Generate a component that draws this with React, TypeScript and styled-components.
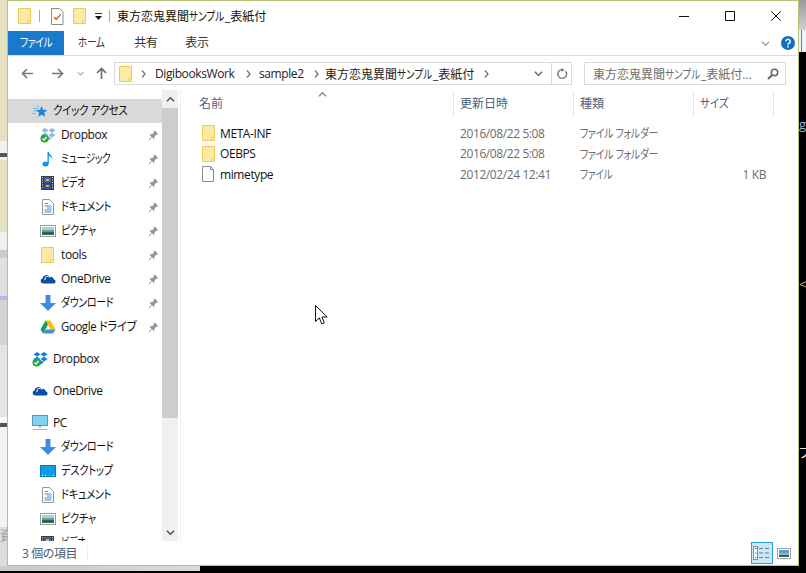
import { ReactNode } from 'react';
import styled, { createGlobalStyle } from 'styled-components';

const GlobalStyle = createGlobalStyle`
  html, body {
    margin: 0;
    padding: 0;
    background: #000;
    overflow: hidden;
  }
  body {
    font-family: "Open Sans", "Noto Sans CJK JP", sans-serif;
    font-size: 12px;
    letter-spacing: -0.4px;
    font-feature-settings: "palt";
    color: #111;
  }
  svg {
    display: block;
    flex-shrink: 0;
  }
`;

const Screen = styled.div`
  position: relative;
  width: 806px;
  height: 573px;
  overflow: hidden;
  background: #000;
`;

const Upper = styled.div`
  display: flex;
  height: 566px;
`;

const LeftStrip = styled.div`
  width: 7px;
  display: flex;
  flex-direction: column;
  overflow: hidden;
`;

const Band = styled.div<{ $h: number; $bg: string }>`
  height: ${(p) => p.$h}px;
  background: ${(p) => p.$bg};
  flex-shrink: 0;
`;

const RightStrip = styled.div`
  width: 7px;
  display: flex;
  flex-direction: column;
  overflow: hidden;
`;

const StripGlyph = styled.div<{ $top: number; $color: string; $bg?: string }>`
  margin-top: ${(p) => p.$top}px;
  height: 16px;
  line-height: 16px;
  font-size: 13px;
  color: ${(p) => p.$color};
  background: ${(p) => p.$bg || 'transparent'};
  white-space: nowrap;
  flex-shrink: 0;
`;

const BottomStrip = styled.div`
  width: 200px;
  height: 5px;
  background: linear-gradient(90deg, #c9c9c9, #dadada);
`;

const Window = styled.div`
  width: 792px;
  height: 566px;
  box-sizing: border-box;
  border: 1px solid #b6c274;
  background: #fff;
  display: flex;
  flex-direction: column;
`;

const Narrow = styled.span<{ $s: number; $cut?: number }>`
  display: inline-block;
  white-space: nowrap;
  transform: scaleX(${(p) => p.$s});
  transform-origin: left center;
  margin-right: ${(p) => -(p.$cut || 0)}px;
`;

const TitleBar = styled.div`
  height: 30px;
  display: flex;
  align-items: center;
  flex-shrink: 0;
`;

const QuickTools = styled.div`
  display: flex;
  align-items: center;
  padding-left: 10px;
  width: 109px;
  box-sizing: border-box;
`;

const ToolSep = styled.div<{ $left: number }>`
  width: 1px;
  height: 12px;
  background: #a8a8a8;
  margin-left: ${(p) => p.$left}px;
`;

const ToolSlot = styled.div<{ $left: number }>`
  margin-left: ${(p) => p.$left}px;
`;

const Title = styled.div`
  flex: 1;
  letter-spacing: 0;
  color: #111;
  white-space: nowrap;
`;

const WindowButtons = styled.div`
  display: flex;
  align-items: center;
  gap: 36px;
  padding-right: 17px;
`;

const RibbonTabs = styled.div`
  height: 25px;
  box-sizing: border-box;
  border-bottom: 1px solid #dadbdc;
  display: flex;
  align-items: flex-start;
  flex-shrink: 0;
`;

const FileTab = styled.div`
  width: 56px;
  height: 24px;
  line-height: 23px;
  box-sizing: border-box;
  padding-left: 12px;
  background: #1979ca;
  color: #fff;
`;

const RibbonTab = styled.div<{ $left: number }>`
  margin-left: ${(p) => p.$left}px;
  line-height: 23px;
  color: #333;
`;

const RibbonRight = styled.div`
  margin-left: auto;
  height: 24px;
  display: flex;
  align-items: center;
  gap: 11px;
  padding-right: 3px;
`;

const AddressRow = styled.div`
  height: 34px;
  display: flex;
  align-items: flex-start;
  padding-top: 6px;
  box-sizing: border-box;
  flex-shrink: 0;
`;

const NavButtons = styled.div`
  width: 106px;
  height: 23px;
  display: flex;
  align-items: center;
  padding-left: 13px;
  box-sizing: border-box;
`;

const NavSlot = styled.div<{ $left: number }>`
  margin-left: ${(p) => p.$left}px;
`;

const AddressBox = styled.div`
  width: 458px;
  height: 23px;
  box-sizing: border-box;
  border: 1px solid #d9d9d9;
  display: flex;
  align-items: center;
  padding-left: 4px;
`;

const Crumb = styled.span<{ $width: number; $plain?: boolean }>`
  width: ${(p) => p.$width}px;
  color: #222;
  white-space: nowrap;
  letter-spacing: ${(p) => (p.$plain ? '0' : '-0.4px')};
`;

const CrumbArrow = styled.div<{ $left: number; $right: number }>`
  margin: 0 ${(p) => p.$right}px 0 ${(p) => p.$left}px;
`;

const AddressEnd = styled.div`
  margin-left: auto;
  display: flex;
  align-items: center;
  height: 100%;
`;

const DropSlot = styled.div`
  width: 25px;
  height: 100%;
  display: flex;
  align-items: center;
  justify-content: center;
  border-right: 1px solid #d9d9d9;
`;

const RefreshSlot = styled.div`
  width: 19px;
  display: flex;
  align-items: center;
  justify-content: center;
`;

const SearchBox = styled.div`
  width: 202px;
  height: 23px;
  margin-left: 12px;
  box-sizing: border-box;
  border: 1px solid #d9d9d9;
  display: flex;
  align-items: center;
  justify-content: space-between;
  padding: 0 6px 0 8px;
  color: #6d6d6d;
  letter-spacing: 0;
`;

const SearchText = styled.span`
  white-space: nowrap;
`;

const Body = styled.div`
  flex: 1;
  display: flex;
  min-height: 0;
`;

const NavPane = styled.div`
  width: 154px;
  padding-top: 9px;
  box-sizing: border-box;
  overflow: hidden;
  flex-shrink: 0;
`;

const NavRow = styled.div<{ $level: number; $active?: boolean; $gap?: boolean }>`
  height: 24px;
  display: flex;
  align-items: center;
  gap: 5px;
  padding-left: ${(p) => (p.$level ? 32 : 24)}px;
  padding-right: 3px;
  margin-top: ${(p) => (p.$gap ? 8 : 0)}px;
  background: ${(p) => (p.$active ? '#d9d9d9' : 'transparent')};
  white-space: nowrap;
`;

const NavIconSlot = styled.div`
  width: 16px;
  display: flex;
  justify-content: center;
`;

const NavLabel = styled.div`
  margin-bottom: 2px;
`;

const PinSlot = styled.div`
  margin-left: auto;
`;

const Scrollbar = styled.div`
  width: 16px;
  display: flex;
  flex-direction: column;
  background: #f0f0f0;
  flex-shrink: 0;
`;

const ScrollButton = styled.div`
  height: 18px;
  display: flex;
  align-items: center;
  justify-content: center;
  flex-shrink: 0;
`;

const ScrollTrack = styled.div`
  flex: 1;
`;

const ScrollThumb = styled.div`
  height: 310px;
  background: #cdcdcd;
`;

const FilePane = styled.div`
  flex: 1;
  margin-left: 2px;
  border-left: 1px solid #f0f0f0;
  padding-top: 2px;
`;

const HeaderRow = styled.div`
  position: relative;
  display: grid;
  grid-template-columns: 273px 120px 120px 80px;
  height: 24px;
  margin-bottom: 7px;
`;

const HeaderCell = styled.div<{ $pad: number }>`
  padding-left: ${(p) => p.$pad}px;
  line-height: 24px;
  letter-spacing: 0;
  color: #4c607a;
  border-right: 1px solid #e5e5e5;
`;

const SortCaret = styled.div`
  position: absolute;
  left: 137px;
  top: -2px;
`;

const FileRow = styled.div`
  display: grid;
  grid-template-columns: 273px 120px 120px 80px;
  height: 20.5px;
  align-items: center;
`;

const NameCell = styled.div`
  display: flex;
  align-items: center;
  gap: 4px;
  padding-left: 21px;
  color: #111;
`;

const MetaCell = styled.div<{ $right?: boolean }>`
  padding: 0 8px 0 6px;
  color: #6d6d6d;
  white-space: nowrap;
  text-align: ${(p) => (p.$right ? 'right' : 'left')};
`;

const StatusBar = styled.div`
  height: 24px;
  display: flex;
  align-items: center;
  flex-shrink: 0;
  color: #4a5a70;
`;

const StatusText = styled.div`
  width: 65px;
  padding-left: 14px;
  white-space: nowrap;
`;

const StatusSep = styled.div`
  width: 1px;
  height: 14px;
  background: #efefef;
`;

const ViewButtons = styled.div`
  margin-left: auto;
  display: flex;
  align-items: center;
  gap: 4px;
  padding-right: 7px;
`;

const ViewButton = styled.div<{ $selected?: boolean }>`
  width: 22px;
  height: 22px;
  box-sizing: border-box;
  display: flex;
  align-items: center;
  justify-content: center;
  border: 1px solid ${(p) => (p.$selected ? '#26a0da' : 'transparent')};
  background: ${(p) => (p.$selected ? '#cbe8f6' : 'transparent')};
`;

const Cursor = styled.div`
  position: absolute;
  left: 315px;
  top: 305px;
`;

const FolderIcon = () => (
  <svg width="14" height="16" viewBox="2 0 14 16">
    <path d="M2.5.5h12v15h-12z" fill="#ffe9a6" stroke="#eecb55" />
    <path d="M11.5 15.5v-3h3" fill="#fff3c9" stroke="#eecb55" />
  </svg>
);

const PropsIcon = () => (
  <svg width="13" height="17" viewBox="0 0 13 17">
    <path d="M.5.5h8l3.500 3.500v12.500H.5z" fill="#fff" stroke="#8c8c8c" />
    <path d="M3 9l2.200 2.400 4.500-5" fill="none" stroke="#e2571e" strokeWidth="1.4" />
  </svg>
);

const QuickCaret = () => (
  <svg width="9" height="7" viewBox="0 0 9 7">
    <path d="M1 0h7v1H1z" fill="#333" />
    <path d="M1 3h7L4.500 7z" fill="#111" />
  </svg>
);

const MinIcon = () => (
  <svg width="10" height="10" viewBox="0 0 10 10">
    <path d="M0 5.500h10" stroke="#111" />
  </svg>
);

const MaxIcon = () => (
  <svg width="10" height="10" viewBox="0 0 10 10">
    <path d="M.5.5h9v9h-9z" fill="none" stroke="#111" />
  </svg>
);

const CloseIcon = () => (
  <svg width="10" height="10" viewBox="0 0 10 10">
    <path d="M.3.3l9.400 9.400M9.700.3L.3 9.700" stroke="#111" />
  </svg>
);

const Chevron = ({ up, color = '#888', size = 9 }: { up?: boolean; color?: string; size?: number }) => (
  <svg width={size} height={size} viewBox="0 0 10 10">
    <path
      d={up ? 'M1 7l4-4 4 4' : 'M1 3l4 4 4-4'}
      fill="none"
      stroke={color}
      strokeWidth="1.5"
    />
  </svg>
);

const HelpIcon = () => (
  <svg width="14" height="14" viewBox="0 0 14 14">
    <circle cx="7" cy="7" r="7" fill="#0f6fc0" />
    <path d="M4.800 5.300a2.200 2 0 1 1 3.300 1.800c-.8.5-1.100.9-1.100 1.700" fill="none" stroke="#fff" strokeWidth="1.5" />
    <path d="M6.200 9.800h1.600v1.600H6.200z" fill="#fff" />
  </svg>
);

const ArrowIcon = ({ dir, color }: { dir: 'left' | 'right' | 'up'; color: string }) => {
  const angle = dir === 'left' ? 180 : dir === 'up' ? -90 : 0;
  return (
    <svg width="13" height="13" viewBox="0 0 13 13">
      <g transform={`rotate(${angle} 6.5 6.5)`}>
        <path d="M1 6.500h10M7 2l4.500 4.500L7 11" fill="none" stroke={color} strokeWidth="1.7" />
      </g>
    </svg>
  );
};

const CrumbChevron = () => (
  <svg width="5" height="8" viewBox="0 0 5 8">
    <path d="M1 .5L4 4 1 7.500" fill="none" stroke="#777" strokeWidth="1.3" />
  </svg>
);

const RefreshIcon = () => (
  <svg width="12" height="12" viewBox="0 0 12 12">
    <path d="M9.600 3.200A4.400 4.400 0 1 1 6 1.600" fill="none" stroke="#777" strokeWidth="1.4" />
    <path d="M5.600 0v4l3-2z" fill="#777" />
  </svg>
);

const SearchIcon = () => (
  <svg width="12" height="12" viewBox="0 0 12 12">
    <circle cx="7.500" cy="4.500" r="3.200" fill="none" stroke="#666" strokeWidth="1.5" />
    <path d="M5 7L1 11" stroke="#666" strokeWidth="2" />
  </svg>
);

const PinIcon = () => (
  <svg width="11" height="11" viewBox="0 0 10 11">
    <path d="M6 .3l3.700 3.700-1 .6-.7-.2L6 6.500l.2 1.800-.9.7L1.200 5l.7-.9 1.800.2 2-2-.2-.8z" fill="#949494" />
    <path d="M3 7.200L.4 10" stroke="#949494" />
  </svg>
);

const StarIcon = () => (
  <svg width="16" height="16" viewBox="0 0 16 16">
    <path d="M9.600 3l1.600 3.700 4 .4-3 2.700.9 3.900-3.500-2-3.400 2 .9-3.900-3-2.700 4-.4z" fill="#1b84d8" />
    <path d="M1 5.500h4M2 8h3M.5 10.500h3M5 3.500l2 .5" stroke="#62b1ea" />
  </svg>
);

const DropboxIcon = ({ tone, badge = '#2fa33f' }: { tone: string; badge?: string }) => (
  <svg width="16" height="16" viewBox="0 0 16 16">
    <path
      d="M5 1L8.500 3.300 5 5.700 1.500 3.300zM12 1l3.500 2.300L12 5.700 8.500 3.300zM5 5.700L8.500 8 5 10.400 1.500 8zM12 5.700L15.500 8 12 10.400 8.500 8zM8.500 9L12 11.200 8.500 13.500 5 11.200z"
      fill={tone}
    />
    <circle cx="4.500" cy="11.500" r="4" fill={badge} />
    <path d="M2.500 11.500l1.500 1.500 2.500-3" fill="none" stroke="#fff" strokeWidth="1.2" />
  </svg>
);

const NoteIcon = () => (
  <svg width="16" height="16" viewBox="0 0 16 16">
    <ellipse cx="5.500" cy="13" rx="3" ry="2.500" fill="#0a97e6" />
    <path d="M7.500 13V1h1.300c.4 2.500 4 3.500 3.500 7.500-.4-2-2-3.200-3.500-3.700V13z" fill="#0a97e6" />
  </svg>
);

const VideoIcon = () => (
  <svg width="16" height="16" viewBox="0 0 16 16">
    <rect x="1" y="1" width="13" height="14" fill="#3d3d3d" />
    <rect x="4" y="2" width="7" height="5.500" fill="#3a62b8" />
    <rect x="4" y="8.500" width="7" height="5.500" fill="#2e4fa5" />
    <rect x="6" y="4" width="3" height="2" fill="#d8b53a" />
    <rect x="6" y="10" width="3" height="2" fill="#d8b53a" />
    <path d="M2 2.500h1M2 5h1M2 7.500h1M2 10h1M2 12.500h1M12 2.500h1M12 5h1M12 7.500h1M12 10h1M12 12.500h1" stroke="#ddd" />
  </svg>
);

const DocIcon = () => (
  <svg width="16" height="16" viewBox="0 0 16 16">
    <path d="M2.500.5h7l4 4v11h-11z" fill="#fff" stroke="#969696" />
    <path d="M5 4.500h3M4.500 7h7M7 9h4.500M4.500 11h7M4.500 13h7" stroke="#3d8fd0" />
  </svg>
);

const PictureIcon = () => (
  <svg width="16" height="16" viewBox="0 0 16 16">
    <rect x=".5" y="2.500" width="15" height="11" fill="#fff" stroke="#9b9b9b" />
    <rect x="2" y="4" width="12" height="4" fill="#a6cfe9" />
    <rect x="2" y="7" width="12" height="2" fill="#6f9d91" />
    <rect x="2" y="9" width="12" height="3" fill="#35634f" />
  </svg>
);

const DownloadIcon = () => (
  <svg width="16" height="16" viewBox="0 0 16 16">
    <path d="M5.500 0h5v8H16l-8 8-8-8h5.500z" fill="#3d8fe0" />
  </svg>
);

const CloudIcon = () => (
  <svg width="16" height="16" viewBox="0 0 16 16">
    <path d="M3 12.500A2.500 2.500 0 0 1 2.400 7.600 4 4 0 0 1 9.800 6a3 3 0 0 1 4 2.400 2.100 2.100 0 0 1 .3 4.100z" fill="#0b4ea6" />
    <path d="M5 9.200a3 3 0 0 1 5.200-2.800" fill="none" stroke="#fff" />
  </svg>
);

const DriveIcon = () => (
  <svg width="16" height="16" viewBox="0 0 16 16">
    <path d="M5.500 1.500h5l5 9h-5z" fill="#f4c20d" />
    <path d="M5.500 1.500L.5 10.500 3 14.500l5-9z" fill="#12a05c" />
    <path d="M3 14.500l2.500-4h10l-2.500 4z" fill="#4688f1" />
  </svg>
);

const MonitorIcon = () => (
  <svg width="16" height="16" viewBox="0 0 16 16">
    <rect x=".5" y=".5" width="15" height="10" fill="#7fd2f6" stroke="#5f97b5" />
    <path d="M6.500 11h3v2h-3z" fill="#b6c4cc" />
    <path d="M1 14.500h14" stroke="#a9b8c2" />
  </svg>
);

const DesktopIcon = () => (
  <svg width="16" height="16" viewBox="0 0 16 16">
    <rect x=".5" y="2.500" width="15" height="11" fill="#0f9ceb" stroke="#0b79b9" />
    <path d="M2 12.500h1M5 12.500h1M13 12.500h1" stroke="#fff" />
  </svg>
);

const FileIcon = () => (
  <svg width="14" height="16" viewBox="2 0 14 16">
    <path d="M2.500.5h8l3 3v12h-11z" fill="#fff" stroke="#8c8c8c" />
    <path d="M10.500.5v3h3" fill="none" stroke="#8c8c8c" />
  </svg>
);

const DetailsViewIcon = () => (
  <svg width="18" height="14" viewBox="0 0 18 14">
    <rect x=".5" y=".5" width="4" height="13" fill="#fff" stroke="#8c8c8c" />
    <path d="M2 2.500h1.500" stroke="#555" />
    <path d="M2 7h1.500" stroke="#3d8fd0" />
    <path d="M2 11.500h1.500" stroke="#c8352b" />
    <path d="M6 2.500h4M12 2.500h4M6 7h4M12 7h4M6 11.500h4M12 11.500h4" stroke="#6f7f8c" />
  </svg>
);

const LargeViewIcon = () => (
  <svg width="14" height="11" viewBox="0 0 14 11">
    <rect x=".5" y=".5" width="13" height="10" fill="#fff" stroke="#a3a3a3" />
    <rect x="2" y="2" width="10" height="3" fill="#5b9fe0" />
    <rect x="2" y="5" width="10" height="2" fill="#8fb9a9" />
    <rect x="2" y="7" width="10" height="2" fill="#35634f" />
  </svg>
);

const CursorIcon = () => (
  <svg width="14" height="20" viewBox="0 0 14 20">
    <path
      d="M.5.500v16l3.800-3.600 2.500 6 2.600-1.100-2.500-5.800h5.300z"
      fill="#fff"
      stroke="#111"
    />
  </svg>
);

type NavEntry = {
  label: string;
  icon: ReactNode;
  level: number;
  squeeze?: number;
  pinned?: boolean;
  active?: boolean;
  gap?: boolean;
};

const navEntries: NavEntry[] = [
  { label: 'クイック アクセス', icon: <StarIcon />, level: 0, squeeze: 0.88, active: true },
  { label: 'Dropbox', icon: <DropboxIcon tone="#8db9e2" />, level: 1, pinned: true },
  { label: 'ミュージック', icon: <NoteIcon />, level: 1, squeeze: 0.81, pinned: true },
  { label: 'ビデオ', icon: <VideoIcon />, level: 1, squeeze: 0.75, pinned: true },
  { label: 'ドキュメント', icon: <DocIcon />, level: 1, squeeze: 0.85, pinned: true },
  { label: 'ピクチャ', icon: <PictureIcon />, level: 1, squeeze: 0.85, pinned: true },
  { label: 'tools', icon: <FolderIcon />, level: 1, pinned: true },
  { label: 'OneDrive', icon: <CloudIcon />, level: 1, pinned: true },
  { label: 'ダウンロード', icon: <DownloadIcon />, level: 1, squeeze: 0.83, pinned: true },
  { label: 'Google ドライブ', icon: <DriveIcon />, level: 1, squeeze: 0.95, pinned: true },
  { label: 'Dropbox', icon: <DropboxIcon tone="#0f7fe0" />, level: 0, gap: true },
  { label: 'OneDrive', icon: <CloudIcon />, level: 0, gap: true },
  { label: 'PC', icon: <MonitorIcon />, level: 0, gap: true },
  { label: 'ダウンロード', icon: <DownloadIcon />, level: 1, squeeze: 0.83 },
  { label: 'デスクトップ', icon: <DesktopIcon />, level: 1, squeeze: 0.86 },
  { label: 'ドキュメント', icon: <DocIcon />, level: 1, squeeze: 0.85 },
  { label: 'ピクチャ', icon: <PictureIcon />, level: 1, squeeze: 0.85 },
  { label: 'ビデオ', icon: <VideoIcon />, level: 1, squeeze: 0.75 },
];

const files = [
  { name: 'META-INF', date: '2016/08/22 5:08', type: 'ファイル フォルダー', squeeze: 0.83, size: '', icon: <FolderIcon /> },
  { name: 'OEBPS', date: '2016/08/22 5:08', type: 'ファイル フォルダー', squeeze: 0.83, size: '', icon: <FolderIcon /> },
  { name: 'mimetype', date: '2012/02/24 12:41', type: 'ファイル', squeeze: 0.81, size: '1 KB', icon: <FileIcon /> },
];

const leftBands: [number, string][] = [
  [141, '#e4e0c0'],
  [12, '#f0f0f0'],
  [4, '#555'],
  [3, '#eee'],
  [72, '#e4e0c0'],
  [18, '#f0f0f0'],
  [8, '#ccc'],
  [38, '#e0e0e0'],
  [4, '#b8b8e8'],
  [45, '#d4d4d4'],
  [72, '#e4e4e4'],
  [6, '#fafafa'],
  [4, '#555'],
  [100, '#f4f4f4'],
];

const App = () => (
  <Screen>
    <GlobalStyle />
    <Upper>
      <LeftStrip>
        {leftBands.map(([h, bg], i) => (
          <Band key={i} $h={h} $bg={bg} />
        ))}
        <StripGlyph $top={0} $color="#999" $bg="#dcdcdc">資</StripGlyph>
        <Band $h={33} $bg="#dcdcdc" />
      </LeftStrip>
      <Window>
        <TitleBar>
          <QuickTools>
            <FolderIcon />
            <ToolSep $left={7} />
            <ToolSlot $left={11}>
              <PropsIcon />
            </ToolSlot>
            <ToolSlot $left={9}>
              <FolderIcon />
            </ToolSlot>
            <ToolSlot $left={7}>
              <QuickCaret />
            </ToolSlot>
            <ToolSep $left={6} />
          </QuickTools>
          <Title>
            東方恋鬼異聞<Narrow $s={0.8} $cut={8}>サンプル</Narrow>_表紙付
          </Title>
          <WindowButtons>
            <MinIcon />
            <MaxIcon />
            <CloseIcon />
          </WindowButtons>
        </TitleBar>
        <RibbonTabs>
          <FileTab>
            <Narrow $s={0.81}>ファイル</Narrow>
          </FileTab>
          <RibbonTab $left={14}>
            <Narrow $s={0.8}>ホーム</Narrow>
          </RibbonTab>
          <RibbonTab $left={23}>共有</RibbonTab>
          <RibbonTab $left={28}>表示</RibbonTab>
          <RibbonRight>
            <Chevron color="#a0a0a0" />
            <HelpIcon />
          </RibbonRight>
        </RibbonTabs>
        <AddressRow>
          <NavButtons>
            <ArrowIcon dir="left" color="#7a7a7a" />
            <NavSlot $left={17}>
              <ArrowIcon dir="right" color="#7a7a7a" />
            </NavSlot>
            <NavSlot $left={13}>
              <Chevron color="#aaa" size={7} />
            </NavSlot>
            <NavSlot $left={11}>
              <ArrowIcon dir="up" color="#6f6f6f" />
            </NavSlot>
          </NavButtons>
          <AddressBox>
            <FolderIcon />
            <CrumbArrow $left={8} $right={9}>
              <CrumbChevron />
            </CrumbArrow>
            <Crumb $width={81}>DigibooksWork</Crumb>
            <CrumbArrow $left={10} $right={8}>
              <CrumbChevron />
            </CrumbArrow>
            <Crumb $width={51}>sample2</Crumb>
            <CrumbArrow $left={4} $right={6}>
              <CrumbChevron />
            </CrumbArrow>
            <Crumb $width={150} $plain>
              東方恋鬼異聞<Narrow $s={0.8} $cut={8}>サンプル</Narrow>_表紙付
            </Crumb>
            <CrumbArrow $left={9} $right={0}>
              <CrumbChevron />
            </CrumbArrow>
            <AddressEnd>
              <DropSlot>
                <Chevron color="#666" />
              </DropSlot>
              <RefreshSlot>
                <RefreshIcon />
              </RefreshSlot>
            </AddressEnd>
          </AddressBox>
          <SearchBox>
            <SearchText>
              東方恋鬼異聞<Narrow $s={0.8} $cut={8}>サンプル</Narrow>_表紙付...
            </SearchText>
            <SearchIcon />
          </SearchBox>
        </AddressRow>
        <Body>
          <NavPane>
            {navEntries.map((entry, i) => (
              <NavRow key={i} $level={entry.level} $active={entry.active} $gap={entry.gap}>
                <NavIconSlot>{entry.icon}</NavIconSlot>
                <NavLabel>
                  <Narrow $s={entry.squeeze || 1}>{entry.label}</Narrow>
                </NavLabel>
                {entry.pinned && (
                  <PinSlot>
                    <PinIcon />
                  </PinSlot>
                )}
              </NavRow>
            ))}
          </NavPane>
          <Scrollbar>
            <ScrollButton>
              <Chevron up color="#505050" />
            </ScrollButton>
            <ScrollTrack>
              <ScrollThumb />
            </ScrollTrack>
            <ScrollButton>
              <Chevron color="#505050" />
            </ScrollButton>
          </Scrollbar>
          <FilePane>
            <HeaderRow>
              <HeaderCell $pad={18}>名前</HeaderCell>
              <HeaderCell $pad={6}>更新日時</HeaderCell>
              <HeaderCell $pad={6}>種類</HeaderCell>
              <HeaderCell $pad={6}>
                <Narrow $s={0.88}>サイズ</Narrow>
              </HeaderCell>
              <SortCaret>
                <Chevron up color="#8a8a8a" />
              </SortCaret>
            </HeaderRow>
            {files.map((file) => (
              <FileRow key={file.name}>
                <NameCell>
                  {file.icon}
                  {file.name}
                </NameCell>
                <MetaCell>{file.date}</MetaCell>
                <MetaCell>
                  <Narrow $s={file.squeeze}>{file.type}</Narrow>
                </MetaCell>
                <MetaCell $right>{file.size}</MetaCell>
              </FileRow>
            ))}
          </FilePane>
        </Body>
        <StatusBar>
          <StatusText>3 個の項目</StatusText>
          <StatusSep />
          <ViewButtons>
            <ViewButton $selected>
              <DetailsViewIcon />
            </ViewButton>
            <LargeViewIcon />
          </ViewButtons>
        </StatusBar>
      </Window>
      <RightStrip>
        <Band $h={30} $bg="linear-gradient(180deg, #9a9a9a, #d0d0d0)" />
        <Band $h={22} $bg="linear-gradient(90deg, #eef4f8 0 2px, #3f8fc8 2px 3px, #eef4f8 3px)" />
        <StripGlyph $top={64} $color="#8fb8dc">g</StripGlyph>
        <StripGlyph $top={144} $color="#c8b98a">&lt;</StripGlyph>
        <StripGlyph $top={152} $color="#e6e6e6">ブ</StripGlyph>
      </RightStrip>
    </Upper>
    <BottomStrip />
    <Cursor>
      <CursorIcon />
    </Cursor>
  </Screen>
);

export default App;
